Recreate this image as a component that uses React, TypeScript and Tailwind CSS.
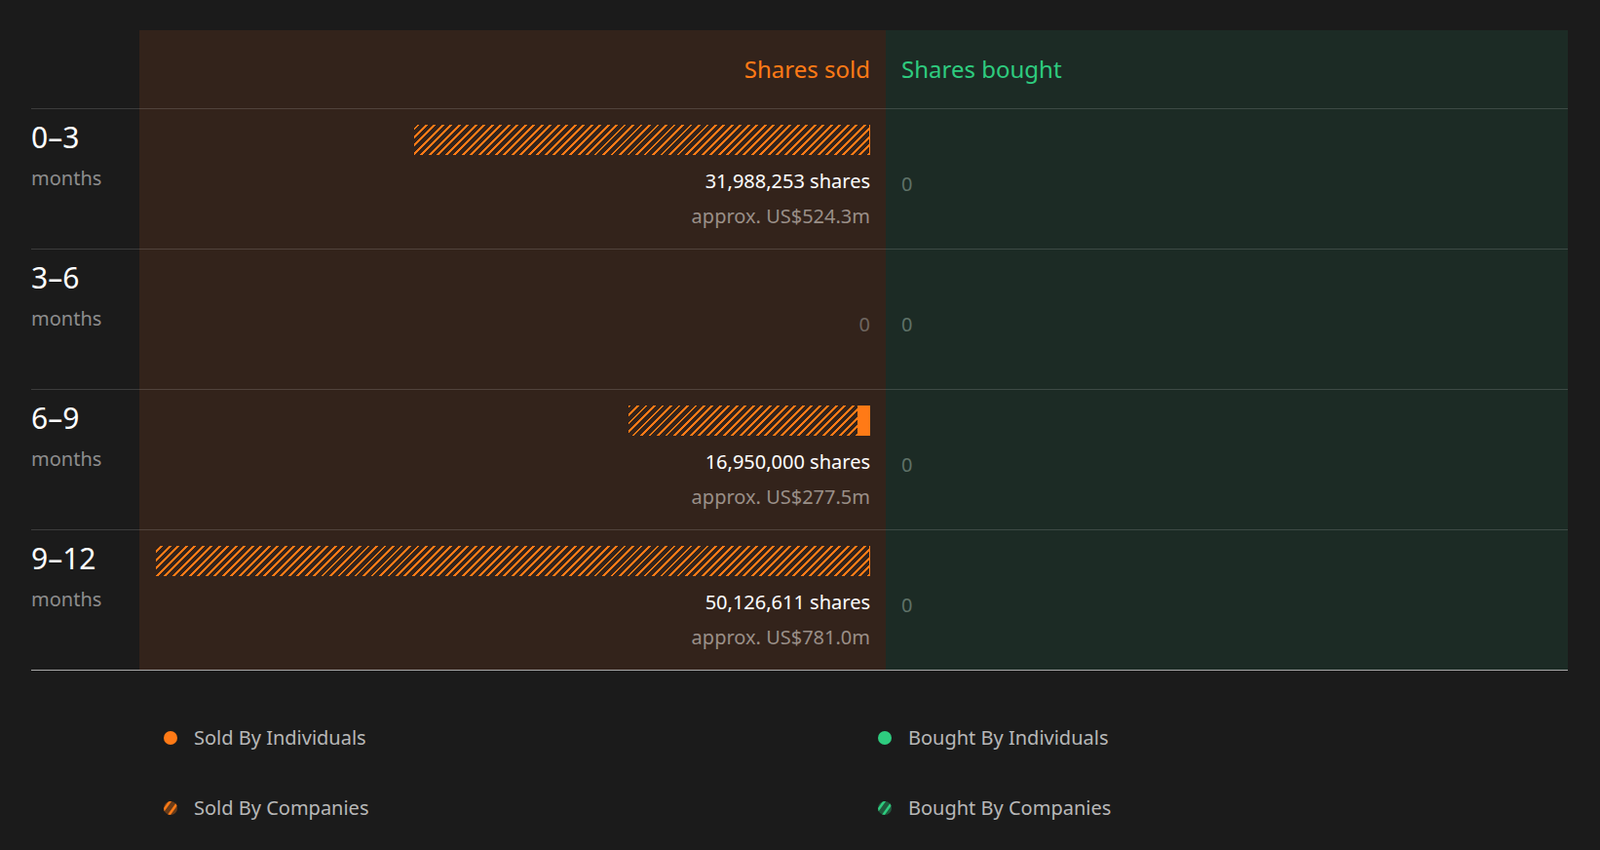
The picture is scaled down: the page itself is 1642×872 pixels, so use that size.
const hatch =
  "bg-[repeating-linear-gradient(-45deg,#ff7a16_0px,#ff7a16_2px,transparent_2px,transparent_6px)]";

type Row = { range: string; shares?: string; value?: string; frac: number; solid?: number };

const rows: Row[] = [
  { range: "0–3", shares: "31,988,253 shares", value: "approx. US$524.3m", frac: 0.638 },
  { range: "3–6", frac: 0 },
  { range: "6–9", shares: "16,950,000 shares", value: "approx. US$277.5m", frac: 0.338, solid: 12 },
  { range: "9–12", shares: "50,126,611 shares", value: "approx. US$781.0m", frac: 1 },
];

function LegendItem({ label, color, striped }: { label: string; color: string; striped?: boolean }) {
  return (
    <div className="flex items-center gap-[17px] text-[20px] text-[#b8b8b8]">
      {striped ? (
        <svg width="14" height="14" viewBox="0 0 14 14">
          <defs>
            <clipPath id={`c-${color}`}>
              <circle cx="7" cy="7" r="7" />
            </clipPath>
          </defs>
          <g clipPath={`url(#c-${color})`}>
            <rect width="14" height="14" fill={color} opacity="0.35" />
            <path d="M-2 12 L8 -2 M4 16 L14 2" stroke={color} strokeWidth="2.5" />
          </g>
        </svg>
      ) : (
        <span className="h-[14px] w-[14px] rounded-full" style={{ background: color }} />
      )}
      <span>{label}</span>
    </div>
  );
}

export default function App() {
  return (
    <div className="min-h-screen bg-[#1b1b1b] px-8 pt-[31px] font-[family-name:'DejaVu_Sans',sans-serif]">
      <div className="grid w-[1577px] grid-cols-[111px_766px_700px]">
        <div className="h-[81px] border-b border-white/15" />
        <div className="flex h-[81px] items-center justify-end border-b border-white/15 bg-[#33231b] pr-4 text-[24px] text-[#ff7a16]">
          Shares sold
        </div>
        <div className="flex h-[81px] items-center border-b border-white/15 bg-[#1c2b25] pl-4 text-[24px] text-[#2ecc7f]">
          Shares bought
        </div>
        {rows.map((r, i) => {
          const last = i === rows.length - 1;
          const border = last ? "border-b border-[#a8a8a8]" : "border-b border-white/15";
          return (
            <div key={r.range} className="contents">
              <div className={`h-[144px] pt-[10px] ${border}`}>
                <div className="text-[30px] leading-[38px] text-white">{r.range}</div>
                <div className="mt-[8px] text-[20px] text-[#8d8d8d]">months</div>
              </div>
              <div className={`flex h-[144px] flex-col items-end bg-[#33231b] px-4 pt-4 ${border}`}>
                {r.frac > 0 ? (
                  <>
                    <div className="flex h-[31px]" style={{ width: `${r.frac * 733}px` }}>
                      <div className={`h-full flex-1 border-r border-[#ff7a16] ${hatch}`} />
                      {r.solid && <div className="h-full bg-[#ff7a16]" style={{ width: r.solid }} />}
                    </div>
                    <div className="mt-[12px] text-[20px] leading-[30px] text-white">{r.shares}</div>
                    <div className="mt-[6px] text-[20px] leading-[30px] text-[#9a8f88]">{r.value}</div>
                  </>
                ) : (
                  <div className="mt-[46px] text-[20px] leading-[30px] text-[#6f6660]">0</div>
                )}
              </div>
              <div className={`h-[144px] bg-[#1c2b25] pl-4 pt-4 ${border}`}>
                <div className="mt-[46px] text-[20px] leading-[30px] text-[#5f7268]">0</div>
              </div>
            </div>
          );
        })}
      </div>
      <div className="ml-[136px] mt-[54px] grid w-[1440px] grid-cols-[733px_700px] gap-y-[42px]">
        <LegendItem label="Sold By Individuals" color="#ff7a16" />
        <LegendItem label="Bought By Individuals" color="#2ecc7f" />
        <LegendItem label="Sold By Companies" color="#ff7a16" striped />
        <LegendItem label="Bought By Companies" color="#2ecc7f" striped />
      </div>
    </div>
  );
}
